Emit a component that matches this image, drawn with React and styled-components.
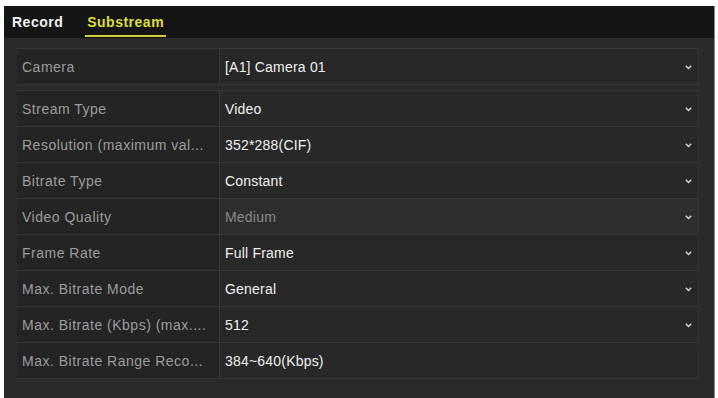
import React from 'react';
import styled, { createGlobalStyle } from 'styled-components';

const Global = createGlobalStyle`
  html, body { margin: 0; padding: 0; background: #fff; }
  body { font-family: "Liberation Sans", Arial, sans-serif; }
`;

const Page = styled.div`
  width: 718px;
  height: 398px;
  padding: 6px 3px 0 4px;
  box-sizing: border-box;
`;

const Panel = styled.div`
  height: 100%;
  background: #2a2a2a;
  border-right: 1px solid #8a8a8a;
  display: flex;
  flex-direction: column;
`;

const TabBar = styled.div`
  height: 32px;
  background: #151515;
  display: flex;
  align-items: stretch;
  padding-left: 6px;
  gap: 20px;
`;

const Tab = styled.div`
  font-size: 14px;
  font-weight: bold;
  letter-spacing: 0.5px;
  color: ${p => (p.active ? '#dede3a' : '#f2f2f2')};
  display: flex;
  align-items: center;
  padding: 0 2px;
  position: relative;
  &::after {
    content: '';
    display: ${p => (p.active ? 'block' : 'none')};
    position: absolute;
    left: 0;
    right: 0;
    bottom: 1px;
    height: 2px;
    background: #cfcf3a;
  }
`;

const Body = styled.div`
  padding: 10px 15px 0 13px;
  display: flex;
  flex-direction: column;
  gap: 5px;
`;

const Table = styled.div`
  display: flex;
  flex-direction: column;
  border-top: 1px solid #363636;
`;

const Row = styled.div`
  display: grid;
  grid-template-columns: 203px 1fr;
  height: 35px;
  border-bottom: 1px solid #363636;
`;

const Label = styled.div`
  background: #242424;
  color: #9c9c9c;
  font-size: 14px;
  letter-spacing: 0.5px;
  display: flex;
  align-items: center;
  padding-left: 5px;
  border-right: 1px solid #393939;
  white-space: nowrap;
  overflow: hidden;
`;

const Value = styled.div`
  background: ${p => (p.disabled ? '#2e2e2e' : '#282828')};
  color: ${p => (p.disabled ? '#8a8a8a' : '#f0f0f0')};
  font-size: 14px;
  letter-spacing: 0.2px;
  display: flex;
  align-items: center;
  justify-content: space-between;
  padding: 0 6px 0 5px;
  border-radius: 0 3px 3px 0;
  border-right: 1px solid #343434;
`;

const Chevron = styled.svg`
  width: 7px;
  height: 5px;
  margin-top: 2px;
`;

const Arrow = () => (
  <Chevron viewBox="0 0 7 5">
    <path d="M0.8 0.8 L3.5 3.6 L6.2 0.8" fill="none" stroke="#d8d8d8" strokeWidth="1.4" />
  </Chevron>
);

const rows = [
  { label: 'Stream Type', value: 'Video', arrow: true },
  { label: 'Resolution (maximum val...', value: '352*288(CIF)', arrow: true },
  { label: 'Bitrate Type', value: 'Constant', arrow: true },
  { label: 'Video Quality', value: 'Medium', arrow: true, disabled: true },
  { label: 'Frame Rate', value: 'Full Frame', arrow: true },
  { label: 'Max. Bitrate Mode', value: 'General', arrow: true },
  { label: 'Max. Bitrate (Kbps) (max....', value: '512', arrow: true },
  { label: 'Max. Bitrate Range Reco...', value: '384~640(Kbps)' },
];

const Field = ({ label, value, arrow, disabled }) => (
  <Row>
    <Label>{label}</Label>
    <Value disabled={disabled}>
      <span>{value}</span>
      {arrow && <Arrow />}
    </Value>
  </Row>
);

export default function App() {
  return (
    <>
      <Global />
      <Page>
        <Panel>
          <TabBar>
            <Tab>Record</Tab>
            <Tab active>Substream</Tab>
          </TabBar>
          <Body>
            <Table>
              <Field label="Camera" value="[A1] Camera 01" arrow />
            </Table>
            <Table>
              {rows.map(r => (
                <Field key={r.label} {...r} />
              ))}
            </Table>
          </Body>
        </Panel>
      </Page>
    </>
  );
}
